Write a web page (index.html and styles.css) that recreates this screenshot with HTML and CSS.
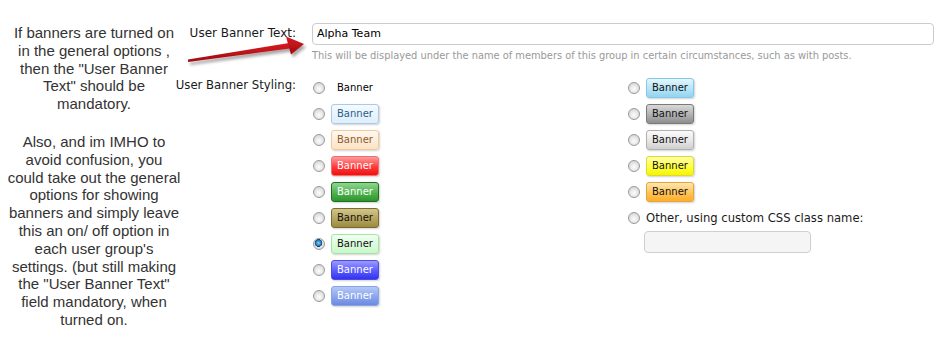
FILE: index.html
```html
<!DOCTYPE html>
<html lang="en">
<head>
    <meta charset="UTF-8">
    <title>User Banner Options</title>
    <link rel="stylesheet" href="styles.css">
</head>
<body>
    <div class="page">
        <div class="note">
            <p>If banners are turned on<br>in the general options ,<br>then the "User Banner<br>Text" should be<br>mandatory.</p>
            <p>Also, and im IMHO to<br>avoid confusion, you<br>could take out the general<br>options for showing<br>banners and simply leave<br>this an on/ off option in<br>each user group's<br>settings. (but still making<br>the "User Banner Text"<br>field mandatory, when<br>turned on.</p>
        </div>

        <form class="form">
            <label class="form-label label-text" for="bannerText">User Banner Text:</label>
            <div class="form-control">
                <input class="text-input" id="bannerText" type="text" value="Alpha Team">
                <div class="hint">This will be displayed under the name of members of this group in certain circumstances, such as with posts.</div>
            </div>

            <div class="form-label">User Banner Styling:</div>
            <div class="options">
                <div class="col">
                    <label class="option"><input type="radio" name="banner"><span class="banner plain">Banner</span></label>
                    <label class="option"><input type="radio" name="banner"><span class="banner b-lightblue">Banner</span></label>
                    <label class="option"><input type="radio" name="banner"><span class="banner b-peach">Banner</span></label>
                    <label class="option"><input type="radio" name="banner"><span class="banner b-red">Banner</span></label>
                    <label class="option"><input type="radio" name="banner"><span class="banner b-green">Banner</span></label>
                    <label class="option"><input type="radio" name="banner"><span class="banner b-olive">Banner</span></label>
                    <label class="option"><input type="radio" name="banner" checked><span class="banner b-lightgreen">Banner</span></label>
                    <label class="option"><input type="radio" name="banner"><span class="banner b-royal">Banner</span></label>
                    <label class="option"><input type="radio" name="banner"><span class="banner b-steel">Banner</span></label>
                </div>
                <div class="col">
                    <label class="option"><input type="radio" name="banner"><span class="banner b-sky">Banner</span></label>
                    <label class="option"><input type="radio" name="banner"><span class="banner b-gray">Banner</span></label>
                    <label class="option"><input type="radio" name="banner"><span class="banner b-silver">Banner</span></label>
                    <label class="option"><input type="radio" name="banner"><span class="banner b-yellow">Banner</span></label>
                    <label class="option"><input type="radio" name="banner"><span class="banner b-orange">Banner</span></label>
                    <label class="option"><input type="radio" name="banner"><span class="other-text">Other, using custom CSS class name:</span></label>
                    <input class="text-input custom-class" type="text">
                </div>
            </div>
        </form>

        <!-- annotation arrow drawn over the screenshot -->
        <svg class="arrow" width="140" height="50" viewBox="180 20 140 50">
            <defs>
                <linearGradient id="red" x1="0" y1="0" x2="0" y2="1">
                    <stop offset="0" stop-color="#d81c22"/>
                    <stop offset="1" stop-color="#9e0b10"/>
                </linearGradient>
                <filter id="shadow" x="-20%" y="-50%" width="140%" height="220%">
                    <feDropShadow dx="2" dy="3" stdDeviation="1.6" flood-color="#000" flood-opacity="0.35"/>
                </filter>
            </defs>
            <g filter="url(#shadow)" fill="url(#red)">
                <polygon points="188,59.5 289,43 290,48.5 188,62"/>
                <polygon points="286,36.5 304,44 291,54.5"/>
            </g>
        </svg>
    </div>
</body>
</html>
```

FILE: styles.css
```css
body {
    margin: 0;
    background: #fff;
    font-family: "DejaVu Sans", Verdana, sans-serif;
    color: #1a1a1a;
}

.page {
    position: relative;
    display: flex;
    width: 938px;
    height: 358px;
}

.note {
    width: 188px;
    flex: none;
    padding-top: 24px;
    font-family: "Liberation Sans", Arial, sans-serif;
    font-size: 15px;
    line-height: 17.8px;
    color: #333;
    text-align: center;
    white-space: nowrap;
}

.note p {
    margin: 0 0 20px;
}

.form {
    display: grid;
    grid-template-columns: 128px 622px;
    column-gap: 16px;
    row-gap: 13px;
    align-content: start;
    margin-left: -20px;
    padding-top: 22px;
}

.form-label {
    font-size: 11.7px;
    line-height: 20px;
    text-align: right;
    white-space: nowrap;
}

.label-text {
    font-size: 12px;
    line-height: 22px;
}

.text-input {
    box-sizing: border-box;
    width: 100%;
    height: 22px;
    margin: 0;
    padding: 0 4px;
    border: 1px solid #ccc;
    border-radius: 4px;
    font-family: inherit;
    font-size: 11px;
    color: #000;
    background: #fff;
}

.hint {
    margin-top: 5px;
    font-size: 9.85px;
    line-height: 12px;
    color: #999;
    white-space: nowrap;
}

.options {
    display: grid;
    grid-template-columns: 315px 1fr;
}

.option {
    display: flex;
    align-items: center;
    height: 26px;
}

.option input {
    appearance: none;
    width: 12px;
    height: 12px;
    margin: 0 6px 0 1px;
    border: 1px solid #9a9a9a;
    border-radius: 50%;
    background: radial-gradient(circle at 50% 60%, #fdfdfd 0, #e8e8e8 45%, #c9c9c9 100%);
    box-sizing: border-box;
    flex: none;
}

.option input:checked {
    background: radial-gradient(circle at 45% 40%, #8fd0f5 0, #2a86c4 30%, #0e3f6e 45%, #e9e9e9 50%, #c9c9c9 100%);
}

.banner {
    display: inline-block;
    box-sizing: border-box;
    height: 20px;
    padding: 0 5px;
    border: 1px solid transparent;
    border-radius: 3px;
    font-size: 10px;
    line-height: 18px;
    box-shadow: 1px 1px 2px rgba(0, 0, 0, 0.18);
}

.banner.plain {
    box-shadow: none;
    color: #000;
}

.b-lightblue { background: linear-gradient(#f5faff, #deeefb); border-color: #a9cbe6; color: #1f5f8c; }
.b-peach { background: linear-gradient(#fff8ef, #fbe3c6); border-color: #f2c99a; color: #8a5a2c; }
.b-red { background: linear-gradient(#ff9c9c, #ff3b3b 55%, #f01010); border-color: #f07070; color: #fff; }
.b-green { background: linear-gradient(#8fd68f, #4fb24f 55%, #2e952e); border-color: #1f6e1f; color: #fff; }
.b-olive { background: linear-gradient(#d1c58a, #b3a25a 60%, #9b8a42); border-color: #7d6c2b; color: #111; }
.b-lightgreen { background: linear-gradient(#f0fff0, #c9f7c9); border-color: #a7e2a7; color: #111; }
.b-royal { background: linear-gradient(#9a9aff, #5a5aff 55%, #3333f0); border-color: #4b4be8; color: #fff; }
.b-steel { background: linear-gradient(#b5c8f7, #8aa5ee 55%, #6b89e0); border-color: #8aa3e6; color: #fff; }
.b-sky { background: linear-gradient(#e3f6fd, #b6e4f7 55%, #92d4f0); border-color: #86c7e3; color: #111; }
.b-gray { background: linear-gradient(#d9d9d9, #b0b0b0 55%, #8e8e8e); border-color: #7a7a7a; color: #111; }
.b-silver { background: linear-gradient(#fafafa, #e6e6e6 55%, #cfcfcf); border-color: #b0b0b0; color: #111; }
.b-yellow { background: linear-gradient(#ffffa8, #ffff40 55%, #f5f500); border-color: #dada30; color: #111; }
.b-orange { background: linear-gradient(#ffe6b0, #ffc45a 55%, #ffad2a); border-color: #e6a534; color: #111; }

.other-text {
    font-size: 11.6px;
    white-space: nowrap;
}

.custom-class {
    width: 167px;
    margin: 0 0 0 17px;
    background: #f5f5f5;
    border-color: #cfcfcf;
}

.arrow {
    position: absolute;
    left: 180px;
    top: 20px;
    overflow: visible;
}
```
